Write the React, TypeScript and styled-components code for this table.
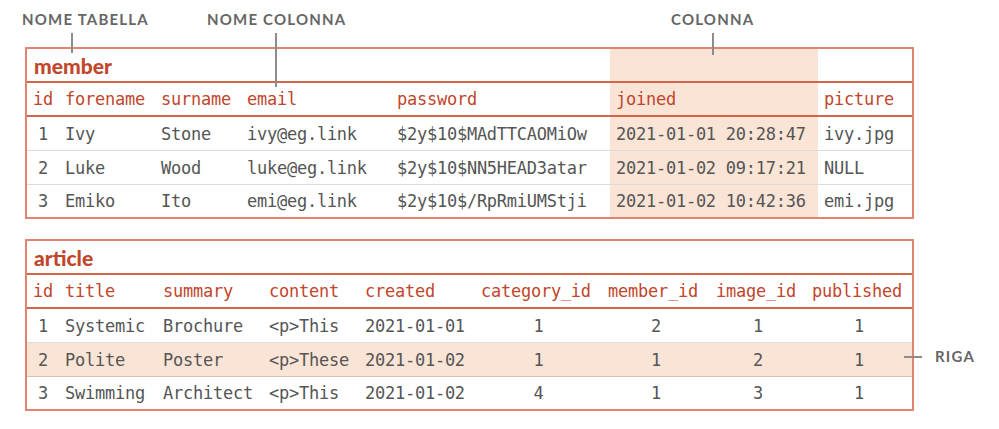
import React from "react";
import styled, { createGlobalStyle } from "styled-components";

const RED = "#c2462b";
const BORDER = "#e0846f";
const LINE = "#d2654c";
const HL = "#f9e4d6";
const TEXT = "#555555";
const MONO = `"DejaVu Sans Mono", "Liberation Mono", monospace`;

const Global = createGlobalStyle`
  html, body { margin: 0; padding: 0; background: #ffffff; }
  body { font-family: ${MONO}; }
`;

const Figure = styled.div`
  position: relative;
  width: 999px;
  height: 429px;
  box-sizing: border-box;
  padding: 47px 0 0 25px;
  display: flex;
  flex-direction: column;
  gap: 20px;
`;

const Table = styled.div`
  width: 889px;
  box-sizing: border-box;
  border: 2px solid ${BORDER};
  display: flex;
  flex-direction: column;
`;

const Row = styled.div<{ $cols: string; $kind: "title" | "head" | "data"; $hl?: boolean; $last?: boolean }>`
  display: grid;
  grid-template-columns: ${(p) => p.$cols};
  height: ${(p) => (p.$kind === "data" ? (p.$last ? 32 : 33) : 32)}px;
  background: ${(p) => (p.$hl ? HL : "transparent")};
  border-bottom: ${(p) =>
    p.$kind === "data" ? (p.$last ? "none" : "1px solid rgba(0,0,0,0.14)") : `2px solid ${LINE}`};
`;

const TitleCell = styled.div<{ $span: number; $hl?: boolean }>`
  grid-column: span ${(p) => p.$span};
  display: flex;
  align-items: center;
  padding-left: 7px;
  font-family: Lato, "Open Sans", sans-serif;
  font-weight: 900;
  font-size: 21px;
  color: ${RED};
  background: ${(p) => (p.$hl ? HL : "transparent")};
`;

const Cell = styled.div<{ $head?: boolean; $center?: boolean; $hl?: boolean }>`
  display: flex;
  align-items: center;
  justify-content: ${(p) => (p.$center ? "center" : "flex-start")};
  padding-left: ${(p) => (p.$center ? 0 : 6)}px;
  font-family: ${MONO};
  font-size: 17px;
  letter-spacing: -0.25px;
  white-space: nowrap;
  overflow: hidden;
  color: ${(p) => (p.$head ? RED : TEXT)};
  background: ${(p) => (p.$hl ? HL : "transparent")};
`;

const Label = styled.div<{ $x: number; $y: number }>`
  position: absolute;
  left: ${(p) => p.$x}px;
  top: ${(p) => p.$y}px;
  font-family: Lato, "Open Sans", sans-serif;
  font-weight: 700;
  font-size: 15px;
  letter-spacing: 1.2px;
  line-height: 16px;
  color: #666666;
  white-space: nowrap;
`;

const VLine = styled.div<{ $x: number; $y: number; $h: number }>`
  position: absolute;
  left: ${(p) => p.$x}px;
  top: ${(p) => p.$y}px;
  width: 1.5px;
  height: ${(p) => p.$h}px;
  background: #8c8c8c;
`;

const HLine = styled.div<{ $x: number; $y: number; $w: number }>`
  position: absolute;
  left: ${(p) => p.$x}px;
  top: ${(p) => p.$y}px;
  height: 1.5px;
  width: ${(p) => p.$w}px;
  background: #8c8c8c;
`;

type Col = { name: string; w: number; center?: boolean; hl?: boolean };

const memberCols: Col[] = [
  { name: "id", w: 32, center: true },
  { name: "forename", w: 96 },
  { name: "surname", w: 86 },
  { name: "email", w: 150 },
  { name: "password", w: 219 },
  { name: "joined", w: 208, hl: true },
  { name: "picture", w: 94 },
];

const memberRows = [
  ["1", "Ivy", "Stone", "ivy@eg.link", "$2y$10$MAdTTCAOMiOw", "2021-01-01 20:28:47", "ivy.jpg"],
  ["2", "Luke", "Wood", "luke@eg.link", "$2y$10$NN5HEAD3atar", "2021-01-02 09:17:21", "NULL"],
  ["3", "Emiko", "Ito", "emi@eg.link", "$2y$10$/RpRmiUMStji", "2021-01-02 10:42:36", "emi.jpg"],
];

const articleCols: Col[] = [
  { name: "id", w: 32, center: true },
  { name: "title", w: 98 },
  { name: "summary", w: 106 },
  { name: "content", w: 96 },
  { name: "created", w: 116 },
  { name: "category_id", w: 127, center: true },
  { name: "member_id", w: 108, center: true },
  { name: "image_id", w: 96, center: true },
  { name: "published", w: 106, center: true },
];

const articleRows = [
  ["1", "Systemic", "Brochure", "<p>This", "2021-01-01", "1", "2", "1", "1"],
  ["2", "Polite", "Poster", "<p>These", "2021-01-02", "1", "1", "2", "1"],
  ["3", "Swimming", "Architect", "<p>This", "2021-01-02", "4", "1", "3", "1"],
];

function DataTable({
  title,
  cols,
  rows,
  hlRow,
  headLeft,
}: {
  title: string;
  cols: Col[];
  rows: string[][];
  hlRow?: number;
  headLeft?: boolean;
}) {
  const tpl = cols.map((c) => `${c.w}px`).join(" ");
  const hlIdx = cols.findIndex((c) => c.hl);
  const span = hlIdx >= 0 ? hlIdx : cols.length;
  return (
    <Table>
      <Row $cols={tpl} $kind="title">
        <TitleCell $span={span}>{title}</TitleCell>
        {hlIdx >= 0 &&
          cols.slice(hlIdx).map((c) => <Cell key={c.name} $hl={c.hl} />)}
      </Row>
      <Row $cols={tpl} $kind="head">
        {cols.map((c, i) => (
          <Cell key={c.name} $head $hl={c.hl} $center={i === 0 || (!headLeft && c.center)}>
            {c.name}
          </Cell>
        ))}
      </Row>
      {rows.map((r, ri) => (
        <Row key={ri} $cols={tpl} $kind="data" $hl={ri === hlRow} $last={ri === rows.length - 1}>
          {r.map((v, ci) => (
            <Cell key={ci} $hl={cols[ci].hl} $center={cols[ci].center}>
              {v}
            </Cell>
          ))}
        </Row>
      ))}
    </Table>
  );
}

export default function App() {
  return (
    <>
      <Global />
      <Figure>
        <DataTable title="member" cols={memberCols} rows={memberRows} />
        <DataTable title="article" cols={articleCols} rows={articleRows} hlRow={1} headLeft />

        <Label $x={22} $y={11}>NOME TABELLA</Label>
        <VLine $x={71} $y={33} $h={20} />
        <Label $x={207} $y={11}>NOME COLONNA</Label>
        <VLine $x={275} $y={33} $h={54} />
        <Label $x={671} $y={11}>COLONNA</Label>
        <VLine $x={712} $y={33} $h={22} />
        <HLine $x={904} $y={356} $w={18} />
        <Label $x={935} $y={348}>RIGA</Label>
      </Figure>
    </>
  );
}
